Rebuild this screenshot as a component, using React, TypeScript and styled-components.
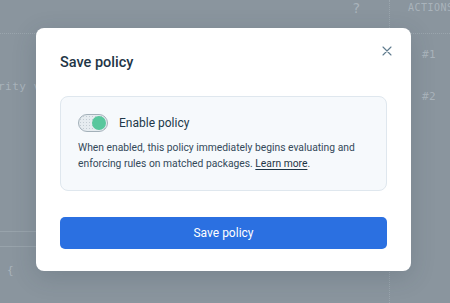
import React from "react";
import styled, { createGlobalStyle } from "styled-components";

const Global = createGlobalStyle`
  html, body { margin: 0; padding: 0; }
  body { width: 450px; height: 303px; overflow: hidden; background: #8a959e; font-family: Roboto, "Noto Sans", sans-serif; }
  * { box-sizing: border-box; }
`;

const Page = styled.div`
  position: relative;
  width: 450px;
  height: 303px;
  background: #8a959e;
  overflow: hidden;
`;

/* dimmed page underneath the dialog */
const BgGrid = styled.div`
  position: absolute;
  inset: 0;
  display: grid;
  grid-template-columns: 1fr 61px;
  grid-template-rows: 34px 1fr;
  font-family: "DejaVu Sans Mono", "Liberation Mono", monospace;
  color: #a9b3bb;
  font-size: 11px;
  letter-spacing: 0.5px;
  white-space: nowrap;
`;

const BgHeadLeft = styled.div`
  display: flex;
  justify-content: flex-end;
  align-items: flex-start;
  padding-right: 28px;
  font-size: 14px;
  line-height: 16px;
  border-bottom: 1px dotted #9aa5ad;
`;

const BgHeadRight = styled.div`
  padding: 2px 0 0 18px;
  font-size: 10px;
  overflow: hidden;
  border-left: 1px dotted #9aa5ad;
  border-bottom: 1px dotted #9aa5ad;
`;

const BgBodyLeft = styled.div`
  display: flex;
  flex-direction: column;
  padding-top: 46px;
  margin-left: -2px;
`;

const BgSpacer = styled.div`
  flex: 1;
`;

const BgRule = styled.div`
  width: 42px;
  height: 15px;
  border-top: 1px solid #98a3ab;
`;

const BgBrace = styled.div`
  padding: 3px 0 26px 9px;
`;

const BgBodyRight = styled.div`
  display: flex;
  flex-direction: column;
  gap: 29px;
  padding: 14px 0 0 32px;
  border-left: 1px dotted #9aa5ad;
`;

const Overlay = styled.div`
  position: absolute;
  inset: 0;
  display: flex;
  align-items: flex-start;
  justify-content: center;
  padding-top: 28px;
`;

const Modal = styled.div`
  width: 375px;
  height: 243px;
  background: #ffffff;
  border-radius: 8px;
  box-shadow: 0 6px 24px rgba(40, 55, 70, 0.18);
  padding: 0 24px;
  display: flex;
  flex-direction: column;
  position: relative;
  margin-left: -3px;
`;

const Header = styled.div`
  display: flex;
  align-items: center;
  justify-content: space-between;
  height: 68px;
`;

const Title = styled.h2`
  margin: 0;
  font-size: 14.5px;
  font-weight: 500;
  color: #1e3546;
`;

const CloseButton = styled.button`
  position: absolute;
  top: 17px;
  right: 18px;
  width: 12px;
  height: 12px;
  padding: 0;
  border: none;
  background: none;
  display: flex;
  align-items: center;
  justify-content: center;
  color: #5f7b8e;
`;

const InfoBox = styled.div`
  background: #f6f9fc;
  border: 1px solid #dfe7ee;
  border-radius: 8px;
  padding: 17px 17px 16px 17px;
  height: 95px;
  display: flex;
  flex-direction: column;
  gap: 8px;
`;

const ToggleRow = styled.div`
  display: flex;
  align-items: center;
  gap: 11px;
  height: 18px;
`;

const Track = styled.div`
  width: 30px;
  height: 18px;
  border-radius: 9px;
  border: 1px solid #a3b0b9;
  background-color: #e6ecf0;
  background-image: radial-gradient(#c3ccd3 0.6px, transparent 0.7px);
  background-size: 3px 3px;
  display: flex;
  align-items: center;
  justify-content: flex-end;
  padding: 0 1px;
`;

const Knob = styled.div`
  width: 14px;
  height: 14px;
  border-radius: 50%;
  background: #58c79d;
`;

const ToggleLabel = styled.span`
  font-size: 12px;
  color: #213849;
`;

const Description = styled.p`
  margin: 0;
  font-size: 10.3px;
  line-height: 16px;
  color: #34495a;
`;

const LearnLink = styled.a`
  color: #1e3546;
  text-decoration: underline;
  text-underline-offset: 2px;
`;

const SaveButton = styled.button`
  margin-top: 26px;
  height: 32px;
  width: 100%;
  border: none;
  border-radius: 5px;
  background: #2b70e1;
  color: #ffffff;
  font-family: Roboto, "Noto Sans", sans-serif;
  font-size: 12px;
  font-weight: 400;
`;

export default function App() {
  return (
    <Page>
      <Global />
      <BgGrid>
        <BgHeadLeft>?</BgHeadLeft>
        <BgHeadRight>ACTIONS</BgHeadRight>
        <BgBodyLeft>
          <span>rity v</span>
          <BgSpacer />
          <BgRule />
          <BgRule />
          <BgBrace>{"{"}</BgBrace>
        </BgBodyLeft>
        <BgBodyRight>
          <span>#1</span>
          <span>#2</span>
        </BgBodyRight>
      </BgGrid>
      <Overlay>
        <Modal>
          <Header>
            <Title>Save policy</Title>
          </Header>
          <CloseButton aria-label="Close">
            <svg width="10" height="10" viewBox="0 0 10 10" fill="none">
              <path d="M1 1L9 9M9 1L1 9" stroke="currentColor" strokeWidth="1.1" strokeLinecap="round" />
            </svg>
          </CloseButton>
          <InfoBox>
            <ToggleRow>
              <Track>
                <Knob />
              </Track>
              <ToggleLabel>Enable policy</ToggleLabel>
            </ToggleRow>
            <Description>
              When enabled, this policy immediately begins evaluating and enforcing rules on matched packages.{" "}
              <LearnLink href="#">Learn more</LearnLink>.
            </Description>
          </InfoBox>
          <SaveButton>Save policy</SaveButton>
        </Modal>
      </Overlay>
    </Page>
  );
}
